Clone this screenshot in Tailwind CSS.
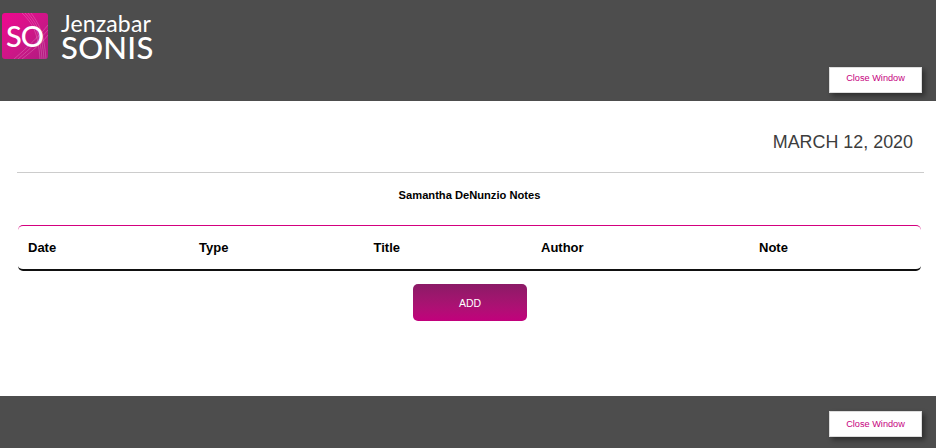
<!DOCTYPE html>
<html lang="en">
<head>
  <meta charset="UTF-8">
  <meta name="viewport" content="width=device-width, initial-scale=1.0">
  <title>Student Notes</title>
  <script src="https://cdn.jsdelivr.net/npm/@tailwindcss/browser@4"></script>
</head>
<body class="bg-white font-['Liberation_Sans',Arial,sans-serif] h-[448px] overflow-hidden flex flex-col">
  <!-- Header -->
  <header class="h-[101px] bg-[#4d4d4d] flex justify-between pl-[2px] pr-[14px]">
    <div class="flex items-start pt-[13px]">
      <!-- Logo -->
      <div class="relative w-[46px] h-[46px] rounded-[3px] overflow-hidden bg-gradient-to-br from-[#f0058f] to-[#b01a80]">
        <svg class="absolute inset-0" width="46" height="46" viewBox="0 0 46 46" fill="none" stroke="#ffffff" stroke-opacity="0.35" stroke-width="0.6">
          <path d="M20 0C30 10 36 18 38 46" />
          <path d="M23 0C32 10 38 18 40 46" />
          <path d="M26 0C34 10 40 18 42 46" />
          <path d="M29 0C36 10 42 18 44 46" />
          <path d="M46 12C38 22 26 34 12 46" />
          <path d="M46 17C38 26 28 36 16 46" />
          <path d="M46 22C40 30 30 38 20 46" />
        </svg>
        <span class="absolute left-[4px] top-[8px] font-['Lato',sans-serif] font-medium text-white text-[29px] leading-[30px] tracking-[-1px]">SO</span>
      </div>
      <div class="ml-[13px] -mt-[1px] text-white font-['Lato',sans-serif]">
        <div class="text-[23px] leading-[22px] tracking-[0.15px]">Jenzabar</div>
        <div class="text-[31px] leading-[26px] font-medium tracking-[0.3px]">SONIS</div>
      </div>
    </div>
    <div class="pt-[64px]">
      <button class="w-[93px] h-[26px] pb-[3px] bg-white border border-[#dddddd] shadow-[3px_3px_5px_rgba(0,0,0,0.4)] text-[#c6007e] text-[9.2px]">Close Window</button>
    </div>
  </header>

  <!-- Main -->
  <main class="flex-1 flex flex-col">
    <div class="h-[72px] ml-[17px] mr-[12px] border-b border-[#cccccc] flex justify-end pt-[31px] pr-[11px]">
      <span class="text-[17.9px] leading-[21px] text-[#3d3d3d]">MARCH 12, 2020</span>
    </div>
    <h1 class="mt-[16px] ml-[3px] text-center text-[11.15px] leading-[13px] font-bold text-black">Samantha DeNunzio Notes</h1>

    <div class="mt-[23px] ml-[18px] mr-[15px] h-[46px] rounded-[5px] border-t border-t-[#d4007f] border-b-2 border-b-[#111111] grid grid-cols-[171px_174.5px_167.5px_218px_1fr] items-center pl-[10px] text-[13px] font-bold text-black">
      <div>Date</div>
      <div>Type</div>
      <div>Title</div>
      <div>Author</div>
      <div>Note</div>
    </div>

    <div class="mt-[13px] pl-[4px] flex justify-center">
      <button class="w-[114px] h-[37px] pt-[2px] rounded-[5px] bg-gradient-to-b from-[#8b1a66] to-[#c2007c] text-white text-[10.5px]">ADD</button>
    </div>
  </main>

  <!-- Footer -->
  <footer class="h-[52px] bg-[#4d4d4d] flex justify-end pt-[15px] pr-[14px]">
    <button class="w-[93px] h-[26px] pt-[1px] bg-white border border-[#dddddd] shadow-[3px_3px_5px_rgba(0,0,0,0.4)] text-[#c6007e] text-[9.2px]">Close Window</button>
  </footer>
</body>
</html>
